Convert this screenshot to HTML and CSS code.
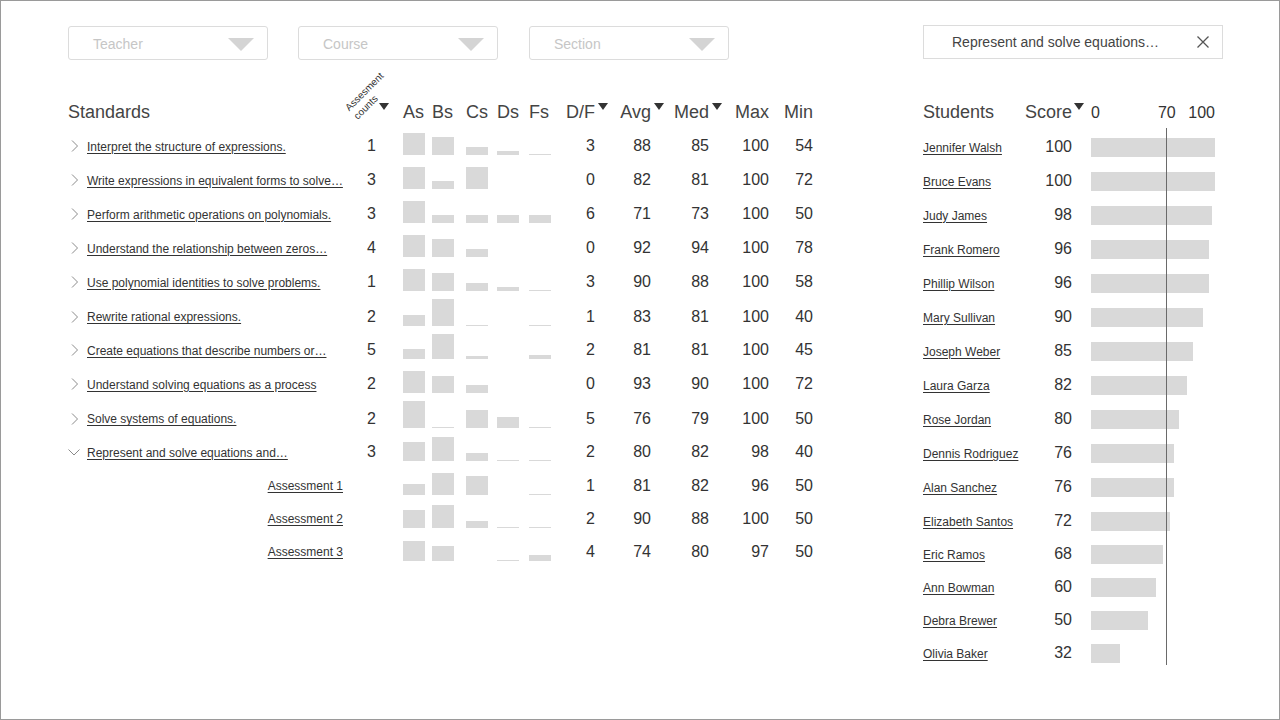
FILE: index.html
```html
<!DOCTYPE html>
<html lang="en">
<head>
<meta charset="utf-8">
<title>Standards report</title>
<link rel="stylesheet" href="styles.css">
</head>
<body>
<div class="frame">
  <div class="topbar">
    <div class="filters">
      <div class="select"><span>Teacher</span><svg class="caret" viewBox="0 0 26 13"><polygon points="0,0 26,0 13,13"/></svg></div>
      <div class="select"><span>Course</span><svg class="caret" viewBox="0 0 26 13"><polygon points="0,0 26,0 13,13"/></svg></div>
      <div class="select"><span>Section</span><svg class="caret" viewBox="0 0 26 13"><polygon points="0,0 26,0 13,13"/></svg></div>
    </div>
    <div class="search"><span>Represent and solve equations…</span><svg class="close" viewBox="0 0 12 12"><path d="M0.5 0.5 L11.5 11.5 M11.5 0.5 L0.5 11.5"/></svg></div>
  </div>

  <div class="main">
    <div class="standards">
      <div class="row head">
        <div class="c-name">Standards</div>
        <div class="c-count"><span class="rot">Assesment<br>counts</span><svg class="sort sort-abs" viewBox="0 0 10 7"><polygon points="0,0 10,0 5,7"/></svg></div>
        <div class="c-bar"><span class="hlabel">As</span></div>
        <div class="c-bar"><span class="hlabel">Bs</span></div>
        <div class="c-bar"><span class="hlabel">Cs</span></div>
        <div class="c-bar"><span class="hlabel">Ds</span></div>
        <div class="c-bar"><span class="hlabel">Fs</span></div>
        <div class="c-num"><span>D/F</span><svg class="sort" viewBox="0 0 10 7"><polygon points="0,0 10,0 5,7"/></svg></div>
        <div class="c-num"><span>Avg</span><svg class="sort" viewBox="0 0 10 7"><polygon points="0,0 10,0 5,7"/></svg></div>
        <div class="c-num"><span>Med</span><svg class="sort" viewBox="0 0 10 7"><polygon points="0,0 10,0 5,7"/></svg></div>
        <div class="c-num"><span>Max</span></div>
        <div class="c-num"><span>Min</span></div>
      </div>

      <div class="row">
        <div class="c-name"><span class="tog"><svg class="chev" viewBox="0 0 7 12"><polyline points="1,0.5 6.5,6 1,11.5"/></svg></span><a class="link">Interpret the structure of expressions.</a></div>
        <div class="c-count">1</div>
        <div class="c-bar"><i class="bar" style="height:22px"></i></div>
        <div class="c-bar"><i class="bar" style="height:18px"></i></div>
        <div class="c-bar"><i class="bar" style="height:8px"></i></div>
        <div class="c-bar"><i class="bar" style="height:4px"></i></div>
        <div class="c-bar"><i class="bar" style="height:1px"></i></div>
        <div class="c-num">3</div><div class="c-num">88</div><div class="c-num">85</div><div class="c-num">100</div><div class="c-num">54</div>
      </div>

      <div class="row">
        <div class="c-name"><span class="tog"><svg class="chev" viewBox="0 0 7 12"><polyline points="1,0.5 6.5,6 1,11.5"/></svg></span><a class="link">Write expressions in equivalent forms to solve…</a></div>
        <div class="c-count">3</div>
        <div class="c-bar"><i class="bar" style="height:22px"></i></div>
        <div class="c-bar"><i class="bar" style="height:8px"></i></div>
        <div class="c-bar"><i class="bar" style="height:22px"></i></div>
        <div class="c-bar"></div>
        <div class="c-bar"></div>
        <div class="c-num">0</div><div class="c-num">82</div><div class="c-num">81</div><div class="c-num">100</div><div class="c-num">72</div>
      </div>

      <div class="row">
        <div class="c-name"><span class="tog"><svg class="chev" viewBox="0 0 7 12"><polyline points="1,0.5 6.5,6 1,11.5"/></svg></span><a class="link">Perform arithmetic operations on polynomials.</a></div>
        <div class="c-count">3</div>
        <div class="c-bar"><i class="bar" style="height:22px"></i></div>
        <div class="c-bar"><i class="bar" style="height:8px"></i></div>
        <div class="c-bar"><i class="bar" style="height:8px"></i></div>
        <div class="c-bar"><i class="bar" style="height:8px"></i></div>
        <div class="c-bar"><i class="bar" style="height:8px"></i></div>
        <div class="c-num">6</div><div class="c-num">71</div><div class="c-num">73</div><div class="c-num">100</div><div class="c-num">50</div>
      </div>

      <div class="row">
        <div class="c-name"><span class="tog"><svg class="chev" viewBox="0 0 7 12"><polyline points="1,0.5 6.5,6 1,11.5"/></svg></span><a class="link">Understand the relationship between zeros…</a></div>
        <div class="c-count">4</div>
        <div class="c-bar"><i class="bar" style="height:22px"></i></div>
        <div class="c-bar"><i class="bar" style="height:18px"></i></div>
        <div class="c-bar"><i class="bar" style="height:8px"></i></div>
        <div class="c-bar"></div>
        <div class="c-bar"></div>
        <div class="c-num">0</div><div class="c-num">92</div><div class="c-num">94</div><div class="c-num">100</div><div class="c-num">78</div>
      </div>

      <div class="row">
        <div class="c-name"><span class="tog"><svg class="chev" viewBox="0 0 7 12"><polyline points="1,0.5 6.5,6 1,11.5"/></svg></span><a class="link">Use polynomial identities to solve problems.</a></div>
        <div class="c-count">1</div>
        <div class="c-bar"><i class="bar" style="height:22px"></i></div>
        <div class="c-bar"><i class="bar" style="height:18px"></i></div>
        <div class="c-bar"><i class="bar" style="height:8px"></i></div>
        <div class="c-bar"><i class="bar" style="height:4px"></i></div>
        <div class="c-bar"><i class="bar" style="height:1px"></i></div>
        <div class="c-num">3</div><div class="c-num">90</div><div class="c-num">88</div><div class="c-num">100</div><div class="c-num">58</div>
      </div>

      <div class="row">
        <div class="c-name"><span class="tog"><svg class="chev" viewBox="0 0 7 12"><polyline points="1,0.5 6.5,6 1,11.5"/></svg></span><a class="link">Rewrite rational expressions.</a></div>
        <div class="c-count">2</div>
        <div class="c-bar"><i class="bar" style="height:11px"></i></div>
        <div class="c-bar"><i class="bar" style="height:27px"></i></div>
        <div class="c-bar"><i class="bar" style="height:1px"></i></div>
        <div class="c-bar"></div>
        <div class="c-bar"><i class="bar" style="height:1px"></i></div>
        <div class="c-num">1</div><div class="c-num">83</div><div class="c-num">81</div><div class="c-num">100</div><div class="c-num">40</div>
      </div>

      <div class="row">
        <div class="c-name"><span class="tog"><svg class="chev" viewBox="0 0 7 12"><polyline points="1,0.5 6.5,6 1,11.5"/></svg></span><a class="link">Create equations that describe numbers or…</a></div>
        <div class="c-count">5</div>
        <div class="c-bar"><i class="bar" style="height:10px"></i></div>
        <div class="c-bar"><i class="bar" style="height:25px"></i></div>
        <div class="c-bar"><i class="bar" style="height:3px"></i></div>
        <div class="c-bar"></div>
        <div class="c-bar"><i class="bar" style="height:4px"></i></div>
        <div class="c-num">2</div><div class="c-num">81</div><div class="c-num">81</div><div class="c-num">100</div><div class="c-num">45</div>
      </div>

      <div class="row">
        <div class="c-name"><span class="tog"><svg class="chev" viewBox="0 0 7 12"><polyline points="1,0.5 6.5,6 1,11.5"/></svg></span><a class="link">Understand solving equations as a process</a></div>
        <div class="c-count">2</div>
        <div class="c-bar"><i class="bar" style="height:22px"></i></div>
        <div class="c-bar"><i class="bar" style="height:17px"></i></div>
        <div class="c-bar"><i class="bar" style="height:8px"></i></div>
        <div class="c-bar"></div>
        <div class="c-bar"></div>
        <div class="c-num">0</div><div class="c-num">93</div><div class="c-num">90</div><div class="c-num">100</div><div class="c-num">72</div>
      </div>

      <div class="row">
        <div class="c-name"><span class="tog"><svg class="chev" viewBox="0 0 7 12"><polyline points="1,0.5 6.5,6 1,11.5"/></svg></span><a class="link">Solve systems of equations.</a></div>
        <div class="c-count">2</div>
        <div class="c-bar"><i class="bar" style="height:27px"></i></div>
        <div class="c-bar"><i class="bar" style="height:1px"></i></div>
        <div class="c-bar"><i class="bar" style="height:18px"></i></div>
        <div class="c-bar"><i class="bar" style="height:11px"></i></div>
        <div class="c-bar"><i class="bar" style="height:1px"></i></div>
        <div class="c-num">5</div><div class="c-num">76</div><div class="c-num">79</div><div class="c-num">100</div><div class="c-num">50</div>
      </div>

      <div class="row">
        <div class="c-name"><span class="tog open"><svg class="chev-down" viewBox="0 0 12 7"><polyline points="0.5,0.5 6,6 11.5,0.5"/></svg></span><a class="link">Represent and solve equations and…</a></div>
        <div class="c-count">3</div>
        <div class="c-bar"><i class="bar" style="height:19px"></i></div>
        <div class="c-bar"><i class="bar" style="height:24px"></i></div>
        <div class="c-bar"><i class="bar" style="height:8px"></i></div>
        <div class="c-bar"><i class="bar" style="height:1px"></i></div>
        <div class="c-bar"><i class="bar" style="height:1px"></i></div>
        <div class="c-num">2</div><div class="c-num">80</div><div class="c-num">82</div><div class="c-num">98</div><div class="c-num">40</div>
      </div>

      <div class="row sub">
        <div class="c-name sub-name"><a class="link">Assessment 1</a></div>
        <div class="c-count"></div>
        <div class="c-bar"><i class="bar" style="height:11px"></i></div>
        <div class="c-bar"><i class="bar" style="height:22px"></i></div>
        <div class="c-bar"><i class="bar" style="height:19px"></i></div>
        <div class="c-bar"></div>
        <div class="c-bar"><i class="bar" style="height:1px"></i></div>
        <div class="c-num">1</div><div class="c-num">81</div><div class="c-num">82</div><div class="c-num">96</div><div class="c-num">50</div>
      </div>

      <div class="row sub">
        <div class="c-name sub-name"><a class="link">Assessment 2</a></div>
        <div class="c-count"></div>
        <div class="c-bar"><i class="bar" style="height:18px"></i></div>
        <div class="c-bar"><i class="bar" style="height:23px"></i></div>
        <div class="c-bar"><i class="bar" style="height:7px"></i></div>
        <div class="c-bar"><i class="bar" style="height:1px"></i></div>
        <div class="c-bar"><i class="bar" style="height:1px"></i></div>
        <div class="c-num">2</div><div class="c-num">90</div><div class="c-num">88</div><div class="c-num">100</div><div class="c-num">50</div>
      </div>

      <div class="row sub">
        <div class="c-name sub-name"><a class="link">Assessment 3</a></div>
        <div class="c-count"></div>
        <div class="c-bar"><i class="bar" style="height:20px"></i></div>
        <div class="c-bar"><i class="bar" style="height:15px"></i></div>
        <div class="c-bar"></div>
        <div class="c-bar"><i class="bar" style="height:1px"></i></div>
        <div class="c-bar"><i class="bar" style="height:6px"></i></div>
        <div class="c-num">4</div><div class="c-num">74</div><div class="c-num">80</div><div class="c-num">97</div><div class="c-num">50</div>
      </div>
    </div>

    <div class="students">
      <div class="srow shead">
        <div class="s-name">Students</div>
        <div class="s-score"><span>Score</span><svg class="sort" viewBox="0 0 10 7"><polygon points="0,0 10,0 5,7"/></svg></div>
        <div></div>
        <div class="axis"><span>0</span><span class="ax70">70</span><span class="ax100">100</span></div>
      </div>
      <div class="srow"><a class="link s-name">Jennifer Walsh</a><div class="s-score">100</div><div></div><div class="s-bar"><i class="hbar" style="width:124px"></i></div></div>
      <div class="srow"><a class="link s-name">Bruce Evans</a><div class="s-score">100</div><div></div><div class="s-bar"><i class="hbar" style="width:124px"></i></div></div>
      <div class="srow"><a class="link s-name">Judy James</a><div class="s-score">98</div><div></div><div class="s-bar"><i class="hbar" style="width:121px"></i></div></div>
      <div class="srow"><a class="link s-name">Frank Romero</a><div class="s-score">96</div><div></div><div class="s-bar"><i class="hbar" style="width:118px"></i></div></div>
      <div class="srow"><a class="link s-name">Phillip Wilson</a><div class="s-score">96</div><div></div><div class="s-bar"><i class="hbar" style="width:118px"></i></div></div>
      <div class="srow"><a class="link s-name">Mary Sullivan</a><div class="s-score">90</div><div></div><div class="s-bar"><i class="hbar" style="width:112px"></i></div></div>
      <div class="srow"><a class="link s-name">Joseph Weber</a><div class="s-score">85</div><div></div><div class="s-bar"><i class="hbar" style="width:102px"></i></div></div>
      <div class="srow"><a class="link s-name">Laura Garza</a><div class="s-score">82</div><div></div><div class="s-bar"><i class="hbar" style="width:96px"></i></div></div>
      <div class="srow"><a class="link s-name">Rose Jordan</a><div class="s-score">80</div><div></div><div class="s-bar"><i class="hbar" style="width:88px"></i></div></div>
      <div class="srow"><a class="link s-name">Dennis Rodriguez</a><div class="s-score">76</div><div></div><div class="s-bar"><i class="hbar" style="width:83px"></i></div></div>
      <div class="srow"><a class="link s-name">Alan Sanchez</a><div class="s-score">76</div><div></div><div class="s-bar"><i class="hbar" style="width:83px"></i></div></div>
      <div class="srow"><a class="link s-name">Elizabeth Santos</a><div class="s-score">72</div><div></div><div class="s-bar"><i class="hbar" style="width:79px"></i></div></div>
      <div class="srow tight"><a class="link s-name">Eric Ramos</a><div class="s-score">68</div><div></div><div class="s-bar"><i class="hbar" style="width:72px"></i></div></div>
      <div class="srow tight"><a class="link s-name">Ann Bowman</a><div class="s-score">60</div><div></div><div class="s-bar"><i class="hbar" style="width:65px"></i></div></div>
      <div class="srow tight"><a class="link s-name">Debra Brewer</a><div class="s-score">50</div><div></div><div class="s-bar"><i class="hbar" style="width:57px"></i></div></div>
      <div class="srow tight"><a class="link s-name">Olivia Baker</a><div class="s-score">32</div><div></div><div class="s-bar"><i class="hbar" style="width:29px"></i></div></div>
      <div class="threshold"></div>
    </div>
  </div>
</div>
</body>
</html>
```

FILE: styles.css
```css
html, body {
  margin: 0;
  padding: 0;
  background: #fff;
}

body {
  font-family: "Liberation Sans", Arial, Helvetica, sans-serif;
  color: #333;
}

.frame {
  width: 1280px;
  height: 720px;
  box-sizing: border-box;
  border: 1px solid #9a9a9a;
  padding: 24px 56px 0 67px;
  overflow: hidden;
}

/* ---------- top bar ---------- */
.topbar {
  display: flex;
  height: 35px;
}

.filters {
  display: flex;
  gap: 30px;
  margin-top: 1px;
}

.select {
  width: 200px;
  height: 34px;
  box-sizing: border-box;
  border: 1px solid #dcdcdc;
  border-radius: 3px;
  display: flex;
  align-items: center;
  justify-content: space-between;
  padding: 1px 13px 0 24px;
  font-size: 14px;
  color: #c6c6c6;
}

.select + .select + .select {
  margin-left: 1px;
}

.caret {
  width: 26px;
  height: 13px;
  margin-top: 1px;
}

.caret polygon {
  fill: #d4d4d4;
}

.search {
  margin-left: auto;
  width: 300px;
  height: 34px;
  box-sizing: border-box;
  border: 1px solid #dcdcdc;
  display: flex;
  align-items: center;
  justify-content: space-between;
  padding: 0 13px 0 28px;
  font-size: 14px;
  color: #444;
}

.close {
  width: 12px;
  height: 12px;
}

.close path {
  stroke: #555;
  stroke-width: 1.3;
  fill: none;
}

/* ---------- main ---------- */
.main {
  display: flex;
  gap: 110px;
  margin-top: 35px;
}

.standards {
  width: 745px;
}

.row {
  display: grid;
  grid-template-columns: 282px 26px 49px 29px 34px 31px 32px 44px 56px 58px 60px 44px;
  height: 34px;
  align-items: center;
}

.row.sub {
  height: 33px;
}

.head {
  font-size: 18px;
  color: #444;
}

.c-name {
  display: flex;
  align-items: center;
  min-width: 0;
  white-space: nowrap;
  font-size: 18px;
}

.sub-name {
  justify-content: flex-end;
  padding-right: 7px;
}

.tog {
  width: 19px;
  flex: none;
  display: flex;
  align-items: center;
  box-sizing: border-box;
  padding-left: 3px;
}

.tog.open {
  padding-left: 0;
}

.chev {
  width: 7px;
  height: 12px;
}

.chev-down {
  width: 12px;
  height: 7px;
  margin-top: 1px;
}

.chev polyline,
.chev-down polyline {
  fill: none;
  stroke: #8a8a8a;
  stroke-width: 1;
}

.link {
  font-size: 12px;
  color: #333;
  text-decoration: underline;
  text-underline-offset: 2px;
  white-space: nowrap;
  cursor: pointer;
}

.row:not(.head) .link {
  margin-top: 1px;
}

.c-count {
  position: relative;
  text-align: right;
  font-size: 16px;
  height: 100%;
  display: flex;
  align-items: center;
  justify-content: flex-end;
}

.rot {
  position: absolute;
  left: -6px;
  top: -11px;
  width: 50px;
  font-size: 10px;
  line-height: 12px;
  white-space: nowrap;
  text-align: left;
  color: #333;
  transform: rotate(-45deg);
}

.sort {
  width: 10px;
  height: 7px;
  flex: none;
}

.sort polygon {
  fill: #333;
}

.sort-abs {
  position: absolute;
  left: 29px;
  top: 8px;
}

.c-bar {
  height: 100%;
  box-sizing: border-box;
  display: flex;
  justify-content: flex-end;
  align-items: flex-end;
  padding-bottom: 8px;
}

.row.sub .c-bar {
  padding-bottom: 7px;
}

.head .c-bar {
  align-items: center;
  padding-bottom: 0;
}

.hlabel {
  width: 22px;
  white-space: nowrap;
  margin-left: -2px;
}

.bar {
  display: block;
  width: 22px;
  background: #d9d9d9;
}

.c-num {
  font-size: 16px;
  text-align: right;
  display: flex;
  justify-content: flex-end;
  align-items: center;
  height: 100%;
}

.head .c-num {
  font-size: 18px;
}

.head .c-num .sort {
  align-self: flex-start;
  margin-top: 8px;
  margin-left: 3px;
  margin-right: -13px;
}

/* ---------- students ---------- */
.students {
  position: relative;
  width: 292px;
}

.srow {
  display: grid;
  grid-template-columns: 100px 49px 19px 124px;
  height: 34px;
  align-items: center;
}

.srow.tight {
  height: 33px;
}

.shead {
  height: 35px;
  font-size: 18px;
  color: #444;
}

.s-name {
  white-space: nowrap;
}

.srow .link.s-name {
  margin-top: 1px;
}

.s-score {
  font-size: 16px;
  text-align: right;
  display: flex;
  justify-content: flex-end;
  align-items: center;
  margin-top: -1px;
}

.shead .s-score {
  font-size: 18px;
  height: 100%;
  margin-top: 0;
}

.shead .s-score .sort {
  align-self: flex-start;
  margin-top: 8px;
  margin-left: 2px;
  margin-right: -12px;
}

.axis {
  display: flex;
  font-size: 16px;
  color: #333;
}

.ax70 {
  margin-left: 58px;
}

.ax100 {
  margin-left: auto;
}

.s-bar {
  display: flex;
  align-items: center;
}

.hbar {
  display: block;
  height: 19px;
  background: #d9d9d9;
}

.threshold {
  position: absolute;
  left: 243px;
  top: 33px;
  width: 1px;
  height: 537px;
  background: #6a6a6a;
}
```
